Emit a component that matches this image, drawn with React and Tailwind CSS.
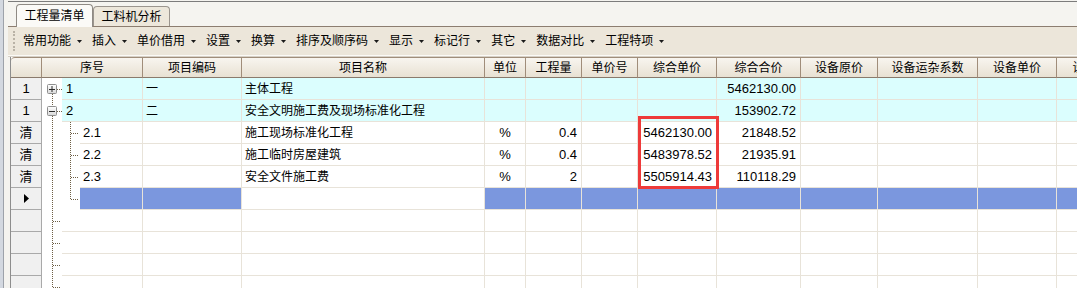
import React from "react";

const FONT = { fontFamily: '"Liberation Sans", "Noto Sans CJK SC", sans-serif' };

const cols = [
  { key: "code", w: "w-[99px]", label: "项目编码", align: "left" },
  { key: "name", w: "w-[243px]", label: "项目名称", align: "left" },
  { key: "unit", w: "w-[41px]", label: "单位", align: "center" },
  { key: "qty", w: "w-[56px]", label: "工程量", align: "right" },
  { key: "pno", w: "w-[56px]", label: "单价号", align: "right" },
  { key: "up", w: "w-[79px]", label: "综合单价", align: "right" },
  { key: "tot", w: "w-[84px]", label: "综合合价", align: "right" },
  { key: "eo", w: "w-[77px]", label: "设备原价", align: "right" },
  { key: "ef", w: "w-[100px]", label: "设备运杂系数", align: "right" },
  { key: "eu", w: "w-[79px]", label: "设备单价", align: "right" },
  { key: "last", w: "w-[80px]", label: "设备合价", align: "right" },
];

const rows = [
  { hdr: "1", type: "first", seq: "1", bg: "cyan", code: "一", name: "主体工程", tot: "5462130.00" },
  { hdr: "1", type: "expanded", seq: "2", bg: "cyan", code: "二", name: "安全文明施工费及现场标准化工程", tot: "153902.72" },
  { hdr: "清", type: "child", seq: "2.1", bg: "white", name: "施工现场标准化工程", unit: "%", qty: "0.4", up: "5462130.00", tot: "21848.52" },
  { hdr: "清", type: "child", seq: "2.2", bg: "white", name: "施工临时房屋建筑", unit: "%", qty: "0.4", up: "5483978.52", tot: "21935.91" },
  { hdr: "清", type: "child", seq: "2.3", bg: "white", name: "安全文件施工费", unit: "%", qty: "2", up: "5505914.43", tot: "110118.29" },
  { hdr: "▶", type: "childLast", seq: "", bg: "sel" },
  { hdr: "", type: "empty", seq: "", bg: "white" },
  { hdr: "", type: "empty", seq: "", bg: "white" },
  { hdr: "", type: "empty", seq: "", bg: "white" },
  { hdr: "", type: "empty", seq: "", bg: "white" },
];

const DOT = { stroke: "#6e5f45", strokeWidth: 1, strokeDasharray: "1 1" };

function Box({ plus }) {
  return (
    <g>
      <defs>
        <linearGradient id="bx" x1="0" y1="0" x2="0" y2="1">
          <stop offset="0" stopColor="#ffffff" />
          <stop offset="1" stopColor="#d8d8d8" />
        </linearGradient>
      </defs>
      <rect x="5.5" y="6.5" width="9" height="9" rx="1" fill="url(#bx)" stroke="#8e8e8e" />
      <line x1="7" y1="11.5" x2="13" y2="11.5" stroke="#2a2a2a" />
      {plus && <line x1="10" y1="8" x2="10" y2="14" stroke="#2a2a2a" />}
    </g>
  );
}

function Gutter({ type }) {
  if (type === "first" || type === "expanded") {
    return (
      <svg width="20" height="22" className="shrink-0 block">
        {type === "expanded" && <line x1="10.5" y1="0" x2="10.5" y2="6" {...DOT} />}
        <line x1="10.5" y1="16" x2="10.5" y2="22" {...DOT} />
        <line x1="15" y1="11.5" x2="20" y2="11.5" {...DOT} />
        <Box plus={type === "first"} />
      </svg>
    );
  }
  if (type === "child" || type === "childLast") {
    return (
      <svg width="38" height="22" className="shrink-0 block">
        <line x1="10.5" y1="0" x2="10.5" y2="22" {...DOT} />
        <line x1="28.5" y1="0" x2="28.5" y2={type === "childLast" ? "12" : "22"} {...DOT} />
        <line x1="29" y1="11.5" x2="37" y2="11.5" {...DOT} />
      </svg>
    );
  }
  return (
    <svg width="20" height="22" className="shrink-0 block">
      <line x1="10.5" y1="0" x2="10.5" y2="22" {...DOT} />
      <line x1="11" y1="11.5" x2="19" y2="11.5" {...DOT} />
    </svg>
  );
}

function bgClass(bg, key) {
  if (bg === "cyan") return "bg-[#dbfefe]";
  if (bg === "sel") return key === "name" ? "bg-white" : "bg-[#7b97de]";
  return "bg-white";
}

function Arrow() {
  return (
    <svg width="5" height="3" className="block">
      <polygon points="0,0 5,0 2.5,3" fill="#1a1a1a" />
    </svg>
  );
}

const menu = ["常用功能", "插入", "单价借用", "设置", "换算", "排序及顺序码", "显示", "标记行", "其它", "数据对比", "工程特项"];

export default function App() {
  return (
    <div className="relative w-[1077px] h-[288px] overflow-hidden bg-[#f4f3ef] flex text-[12px] text-black" style={FONT}>
      <div className="w-[4px] h-full shrink-0 bg-[#d3d8e0] border-r border-[#9da2aa]" />
      <div className="flex-1 min-w-0 flex flex-col">
        {/* tab strip */}
        <div className="h-[27px] shrink-0 pt-[1px]">
          <div className="h-[26px] border-t border-[#7c7c7c] border-b border-b-[#8c7d70] flex items-end pl-[8px] ml-[4px] bg-[#f5f4f0]">
            <div className="relative w-[77px] h-[23px] mb-[-1px] bg-[#fbfaf7] border border-b-0 border-[#8f8a84] rounded-t-[4px] flex items-center justify-center text-[12px] shrink-0">
              工程量清单
            </div>
            <div className="w-[77px] h-[20px] bg-[#ede7db] border border-b-0 border-[#9b958e] rounded-t-[4px] flex items-center justify-center text-[12px] shrink-0">
              工料机分析
            </div>
          </div>
        </div>
        {/* toolbar */}
        <div className="h-[28px] shrink-0 ml-[4px] bg-[#ece6da] flex items-center">
          <div className="w-[2px] h-[20px] ml-[5px] border-l-2 border-dotted border-[#b9b2a6]" />
          <div className="flex items-center ml-[8px]">
            {menu.map((m) => (
              <div key={m} className="flex items-center mr-[10px]">
                <span className="text-[12px] leading-none">{m}</span>
                <span className="ml-[6px]"><Arrow /></span>
              </div>
            ))}
          </div>
        </div>
        <div className="h-[2px] shrink-0 ml-[4px] border-t border-[#fbfaf7] border-b border-b-[#d6d0c6]" />
        {/* grid */}
        <div className="flex-1 min-h-0 ml-[6px] overflow-hidden border-l border-[#8d8d8d] bg-white">
          {/* header */}
          <div className="flex h-[21px] shrink-0">
            <div className="w-[31px] h-full shrink-0 bg-gradient-to-b from-[#f8f5ef] to-[#e8e1d3] border-t border-b border-r border-[#a08d7a] border-b-[#8a7a6c] rounded-tl-[4px]" />
            <div className="w-[101px] h-full shrink-0 bg-gradient-to-b from-[#f8f5ef] to-[#e8e1d3] border-t border-b border-r border-[#a08d7a] border-b-[#8a7a6c] flex items-center justify-center">
              序号
            </div>
            {cols.map((c) => (
              <div key={c.key} className={`${c.w} h-full shrink-0 bg-gradient-to-b from-[#f8f5ef] to-[#e8e1d3] border-t border-b border-r border-[#a08d7a] border-b-[#8a7a6c] flex items-center justify-center whitespace-nowrap overflow-hidden`}>
                {c.label}
              </div>
            ))}
          </div>
          {/* body */}
          {rows.map((r, i) => (
            <div key={i} className="flex h-[22px] shrink-0">
              <div className="w-[31px] h-full shrink-0 bg-[#f0f0f0] border-r border-b border-[#a9a9a9] flex items-center justify-center text-[13px]">
                {r.hdr === "▶" ? (
                  <svg width="5" height="9" className="block">
                    <polygon points="0,0 5,4.5 0,9" fill="#000" />
                  </svg>
                ) : (
                  r.hdr
                )}
              </div>
              <div className="w-[101px] h-full shrink-0 flex bg-white">
                <Gutter type={r.type} />
                <div className={`flex-1 h-full border-r border-b border-[#e8e3d9] flex items-center text-[13px] ${r.type === "child" || r.type === "childLast" ? "pl-[3px]" : "pl-[4px]"} ${bgClass(r.bg, "seq")}`}>
                  {r.seq}
                </div>
              </div>
              {cols.map((c) => {
                const v = r[c.key];
                const isNum = c.key !== "name" && c.key !== "code";
                return (
                  <div
                    key={c.key}
                    className={`${c.w} h-full shrink-0 border-r border-b border-[#e8e3d9] flex items-center whitespace-nowrap overflow-hidden ${bgClass(r.bg, c.key)} ${
                      c.align === "right" ? "justify-end pr-[4px]" : c.align === "center" ? "justify-center" : "pl-[3px]"
                    } ${isNum ? "text-[13px]" : "text-[12px]"}`}
                  >
                    {v || ""}
                  </div>
                );
              })}
            </div>
          ))}
        </div>
      </div>
      {/* red annotation box */}
      <div className="absolute left-[638px] top-[116px] w-[81px] h-[73px] border-[3px] border-[#ee3a3a] pointer-events-none" />
    </div>
  );
}
